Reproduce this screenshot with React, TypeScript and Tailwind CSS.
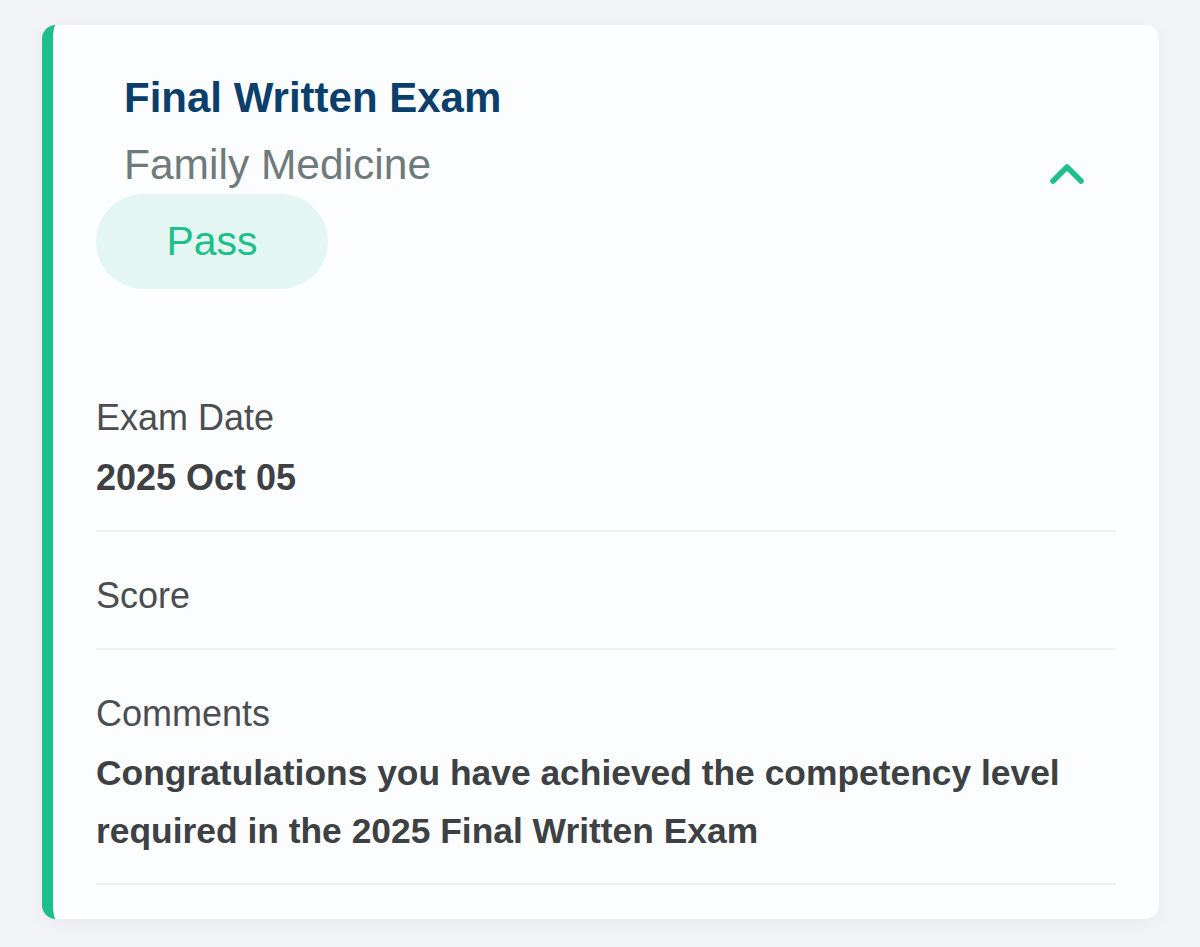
const rows = [
    { label: 'Exam Date', value: '2025 Oct 05' },
    { label: 'Score', value: '' },
    {
        label: 'Comments',
        value: 'Congratulations you have achieved the competency level required in the 2025 Final Written Exam',
    },
];

export default function App() {
    return (
        <div className="min-h-[947px] w-full bg-[#f3f4f8] pt-[25px] pl-[42px] font-['Liberation_Sans',Arial,sans-serif]">
            <div className="w-[1117px] overflow-hidden rounded-[14px] border-l-[11px] border-[#1dbf8a] bg-[#fcfdfe] shadow-[0_4px_18px_rgba(40,50,90,0.06)]">
                {/* Header */}
                <div className="flex items-start justify-between pl-[43px] pr-[72px] pt-[49px]">
                    <div className="flex flex-col">
                        <h2 className="ml-[28px] text-[42px] font-bold leading-[48px] text-[#0b3f6b]">
                            Final Written Exam
                        </h2>
                        <p className="ml-[28px] mt-[19px] text-[42.5px] leading-[48px] text-[#6e7a7c]">
                            Family Medicine
                        </p>
                        <span className="mt-[5px] flex h-[95px] w-[232px] items-center justify-center rounded-full bg-[#e4f6f1] text-[41px] text-[#1dbf8a]">
                            Pass
                        </span>
                    </div>
                    <svg className="mt-[80px]" width="40" height="40" viewBox="0 0 40 40" fill="none">
                        <path
                            d="M6 27 L20 13 L34 27"
                            stroke="#1dbf8a"
                            strokeWidth="5.5"
                            strokeLinecap="round"
                            strokeLinejoin="round"
                        />
                    </svg>
                </div>

                {/* Details */}
                <div className="px-[43px] pb-[34px] pt-[107px]">
                    {rows.map((row, i) => (
                        <div key={row.label} className={i === 0 ? '' : 'pt-[42px]'}>
                            <div className="text-[36px] leading-[44px] text-[#4a4e51]">{row.label}</div>
                            {row.value && (
                                <div
                                    className={
                                        row.label === 'Comments'
                                            ? 'mt-[8px] text-[35.4px] font-bold leading-[58px] text-[#3d4144]'
                                            : 'mt-[16px] text-[36px] font-bold leading-[44px] text-[#3d4144]'
                                    }
                                >
                                    {row.value}
                                </div>
                            )}
                            <div
                                className={
                                    row.label === 'Comments'
                                        ? 'mt-[23px] h-[2px] bg-[#eef0f2]'
                                        : 'mt-[30px] h-[2px] bg-[#eef0f2]'
                                }
                            />
                        </div>
                    ))}
                </div>
            </div>
        </div>
    );
}
